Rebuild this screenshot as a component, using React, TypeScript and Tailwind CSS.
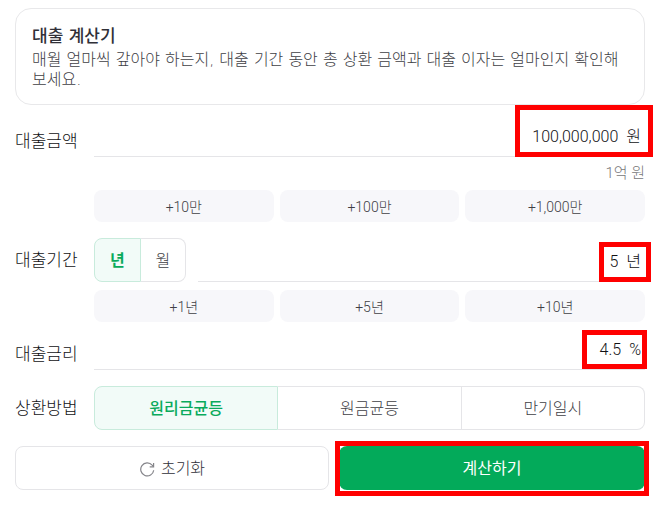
import { useState } from "react"

interface FieldProps {
    id: string
    value: string
    unit: string
    onChange: (value: string) => void
}

const AmountField = ({ id, value, unit, onChange }: FieldProps) => {
    return (
        <div className="flex grow h-11 min-w-0 items-center gap-2 border-b border-[#e5e5e8] pt-1 pr-1 text-[#111114]">
            <input
                id={id}
                type="text"
                inputMode="decimal"
                value={value}
                onChange={(e) => onChange(e.target.value)}
                className="w-full min-w-0 grow bg-transparent text-right text-base leading-6 outline-none"
            />
            <span className="text-base leading-6">{unit}</span>
        </div>
    )
}

const QuickButtons = ({ labels }: { labels: string[] }) => {
    return (
        <div className="grid grid-cols-3 gap-1.5">
            {labels.map((label) => (
                <button key={label} type="button" className="h-8 cursor-pointer rounded-lg bg-[#f7f7fa] pt-0.5 text-sm text-[#404045]">
                    {label}
                </button>
            ))}
        </div>
    )
}

const RefreshIcon = () => {
    return (
        <svg width="16" height="16" viewBox="0 0 16 16" fill="none" stroke="#85858a" strokeWidth="1.2" aria-hidden="true">
            <path d="M14.7 9.2a6.5 6.5 0 1 1-1.5-5l1.2 1.3" />
            <path d="M14.6 2v3.9h-3.9" />
        </svg>
    )
}

const METHODS = ["원리금균등", "원금균등", "만기일시"]

const App = () => {
    const [amount, setAmount] = useState<string>("100,000,000")
    const [period, setPeriod] = useState<string>("5")
    const [rate, setRate] = useState<string>("4.5")
    const [unit, setUnit] = useState<string>("년")
    const [method, setMethod] = useState<string>(METHODS[0])

    const handleReset = () => {
        setAmount("")
        setPeriod("")
        setRate("")
    }

    return (
        <main lang="ko" className="bg-white px-[15px] py-2 font-['Roboto','Noto_Sans_CJK_KR',sans-serif] font-light">
            <section className="rounded-2xl border border-[#e8e8ea] px-4 pt-[15px] pb-[14px] font-['DejaVu_Sans','Noto_Sans_CJK_KR',sans-serif]">
                <h1 className="text-[17px] leading-6 font-medium text-[#303038]">대출 계산기</h1>
                <p className="mt-0.5 text-base leading-5 break-keep text-[#404045]">
                    매월 얼마씩 갚아야 하는지, 대출 기간 동안 총 상환 금액과 대출 이자는 얼마인지 확인해 보세요.
                </p>
            </section>

            <form className="mt-2" onSubmit={(e) => e.preventDefault()}>
                <div className="flex">
                    <label htmlFor="amount" className="w-[79px] shrink-0 pt-4 text-[17px] leading-6 text-[#111114]">대출금액</label>
                    <div className="min-w-0 grow">
                        <div className="relative flex">
                            <AmountField id="amount" value={amount} unit="원" onChange={setAmount} />
                            <span className="pointer-events-none absolute -top-2 -right-2 h-[52px] w-[138px] border-5 border-[#ff0000]"></span>
                        </div>
                        <p className="mt-1 mb-[5px] text-right text-[15px] leading-6 text-[#77777a]">1억 원</p>
                        <QuickButtons labels={["+10만", "+100만", "+1,000만"]} />
                    </div>
                </div>

                <div className="mt-4 flex">
                    <label htmlFor="period" className="w-[79px] shrink-0 pt-2.5 text-[17px] leading-6 text-[#111114]">대출기간</label>
                    <div className="min-w-0 grow">
                        <div className="relative mb-2 flex gap-3">
                            <div className="flex h-11 w-[92px] shrink-0">
                                {["년", "월"].map((item) => (
                                    <button
                                        key={item}
                                        type="button"
                                        aria-pressed={unit === item}
                                        onClick={() => setUnit(item)}
                                        className={`flex-1 cursor-pointer border pt-0.5 text-base first:rounded-l-lg last:rounded-r-lg not-first:border-l-0 ${unit === item ? 'border-[#c8ebdc] bg-[#f2fbf8] font-bold text-[#09aa5c]' : 'border-[#e5e5e8] text-[#404045]'}`}
                                    >
                                        {item}
                                    </button>
                                ))}
                            </div>
                            <AmountField id="period" value={period} unit={unit} onChange={setPeriod} />
                            <span className="pointer-events-none absolute top-1 -right-1.5 h-10 w-[52px] border-5 border-[#ff0000]"></span>
                        </div>
                        <QuickButtons labels={["+1년", "+5년", "+10년"]} />
                    </div>
                </div>

                <div className="mt-1 flex">
                    <label htmlFor="rate" className="w-[79px] shrink-0 pt-4 text-[17px] leading-6 text-[#111114]">대출금리</label>
                    <div className="relative flex min-w-0 grow">
                        <AmountField id="rate" value={rate} unit="%" onChange={setRate} />
                        <span className="pointer-events-none absolute top-1 -right-0.5 h-[39px] w-[65px] border-5 border-[#ff0000]"></span>
                    </div>
                </div>

                <div className="mt-4 flex">
                    <span id="method" className="w-[79px] shrink-0 pt-2.5 text-[17px] leading-6 text-[#111114]">상환방법</span>
                    <div role="group" aria-labelledby="method" className="flex h-11 grow">
                        {METHODS.map((item) => (
                            <button
                                key={item}
                                type="button"
                                aria-pressed={method === item}
                                onClick={() => setMethod(item)}
                                className={`flex-1 cursor-pointer border pt-0.5 text-base first:rounded-l-lg last:rounded-r-lg not-first:border-l-0 ${method === item ? 'border-[#c8ebdc] bg-[#f2fbf8] font-medium text-[#09aa5c]' : 'border-[#e5e5e8] text-[#404045]'}`}
                            >
                                {item}
                            </button>
                        ))}
                    </div>
                </div>

                <div className="mt-4 grid grid-cols-[314fr_306fr] gap-2.5">
                    <button type="button" onClick={handleReset} className="flex h-11 cursor-pointer items-center justify-center gap-1.5 rounded-lg border border-[#e5e5e8] pt-0.5 text-base text-[#303038]">
                        <RefreshIcon />
                        초기화
                    </button>
                    <div className="relative flex">
                        <button type="submit" className="h-11 grow cursor-pointer rounded-lg bg-[#03aa5a] pt-0.5 text-base font-normal text-white">계산하기</button>
                        <span className="pointer-events-none absolute -inset-x-1 -top-[5px] -bottom-1.5 border-5 border-[#ff0000]"></span>
                    </div>
                </div>
            </form>
        </main>
    )
}

export default App
